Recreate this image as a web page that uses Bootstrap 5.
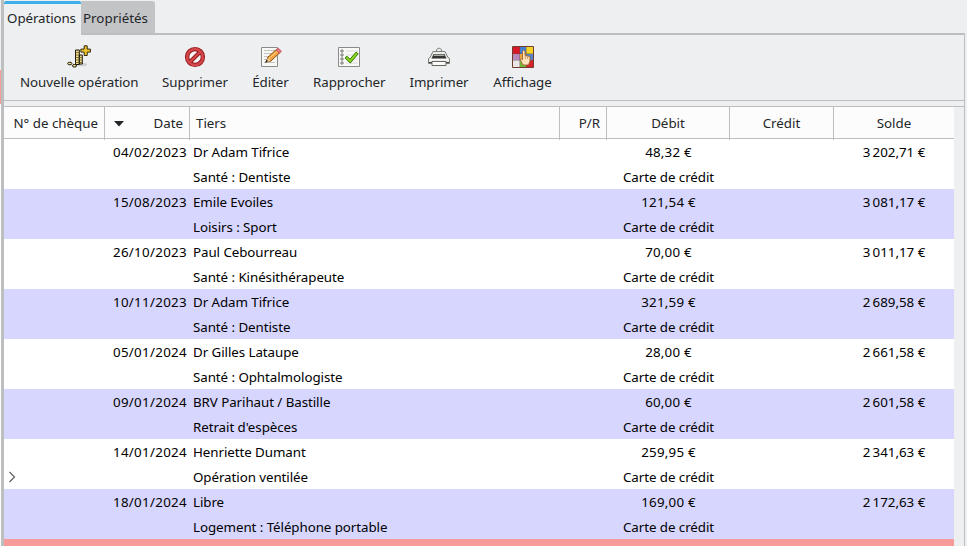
<!DOCTYPE html>
<html lang="fr">
<head>
<meta charset="utf-8">
<meta name="viewport" content="width=device-width, initial-scale=1">
<title>Opérations</title>
<link href="https://cdn.jsdelivr.net/npm/bootstrap@5.3.0/dist/css/bootstrap.min.css" rel="stylesheet">
<style>
:root { --line: #bcbebf; --ink: #232629; --panel: #eeeff1; }
body { font: 13.33px/25px "Noto Sans", sans-serif; letter-spacing: -.06px; color: var(--ink); background: var(--panel); }
.app-window { height: 546px; }
.edge { width: 4px; border-right: 3px solid var(--line); background: linear-gradient(#eff0f1 70px, #f79a9a 70px 104px, #fff 104px); background-clip: padding-box; }
.main-pane { width: 961px; }
.tab-strip { height: 35px; padding-top: 1px; border-bottom: 2px solid var(--line); }
.tab-strip .nav-link { height: 32px; padding: 0 5px 0 0; line-height: 35px; border: 0; border-radius: 0 3px 0 0; color: var(--ink); background: #c3c4c6; width: 74px; text-align: center; letter-spacing: .02px; }
.tab-strip .nav-link.active { width: 77px; height: 34px; margin-bottom: -2px; line-height: 29px; border-top: 3px solid #3daee9; border-radius: 2px 2px 0 0; background: var(--panel); padding-right: 2px; letter-spacing: -.1px; }
.pane-body { border-right: 1px solid var(--line); }
.tool-row { height: 66px; padding: 10px 0 0 16px; border-bottom: 1px solid var(--line); }
.tool { width: 118px; height: 50px; border: 0; padding: 0; background: none; color: var(--ink); line-height: 25px; white-space: nowrap; letter-spacing: -.06px; }
.tool svg { width: 24px; height: 24px; display: block; margin: 0 auto 1px; }
.w-sup { width: 66px; } .w-edi { width: 37px; } .w-rap { width: 72px; } .w-imp { width: 60px; } .w-aff { width: 59px; }
.ledger-frame { margin-top: 5px; border-top: 1px solid var(--line); }
.ledger { width: 950px; }
.ledger-row, .ledger-head { display: grid; grid-template-columns: 101px 85px 370px 47px 123px 104px 120px; }
.ledger-row { grid-auto-rows: 25px; height: 50px; background: #fff; color: #000; padding-top: 1px; }
.ledger-row:nth-child(odd) { background: #d7d6ff; }
.ledger-head { height: 32px; background: #fcfcfc; border-bottom: 1px solid var(--line); line-height: 33px; letter-spacing: 0; }
.ledger-head > div { border-right: 1px solid var(--line); }
.ledger-head > div:last-child { border: 0; }
.head-cheque { padding-right: 6px; }
.head-date { padding: 0 6px 0 8px; }
.head-tiers { padding-left: 6px; }
.head-pr { padding-right: 6px; }
.c-date { grid-column: 2; text-align: right; padding-right: 3px; letter-spacing: .31px; }
.c-tiers { grid-column: 3; padding-left: 3px; }
.c-debit { grid-column: 5; text-align: center; }
.c-solde { grid-column: 7; text-align: center; }
.c-sum { letter-spacing: .22px; }
.c-mark { grid-column: 1; padding-left: 4px; }
.c-mark svg { display: block; margin-top: 6px; }
.next-row { height: 7px; background: #f79a9a; }
</style>
<script src="https://cdn.jsdelivr.net/npm/bootstrap@5.3.0/dist/js/bootstrap.bundle.min.js"></script>
</head>
<body class="overflow-hidden">
<div class="app-window d-flex">
  <div class="edge flex-shrink-0"></div>
  <main class="main-pane flex-shrink-0">
    <nav class="nav tab-strip flex-nowrap">
      <a class="nav-link active" href="#">Opérations</a>
      <a class="nav-link" href="#">Propriétés</a>
    </nav>
    <div class="pane-body">
      <div class="tool-row d-flex gap-4">
        <button class="tool" type="button">
          <svg viewBox="0 0 24 24"><ellipse cx="15" cy="19.500" rx="5" ry="1.800" fill="#000" opacity=".13"/>
            <path d="M8.500 5h3.800v14.500H8.500zM12.300 10h3v9h-3z" fill="#efdf95" stroke="#1c1606"/>
            <path d="M8.500 7.500h3.800m-3.800 2.500h3.800m-3.800 2.500h3.800m-3.800 2.500h3.800m-3.800 2.500h3.800m0-5h3m-3 2.500h3m-3 2.500h3" stroke="#6a5820" stroke-width=".8"/>
            <ellipse cx="2.800" cy="18.500" rx="2.100" ry="1.300" fill="#efdf95" stroke="#1c1606"/><ellipse cx="7.500" cy="20.800" rx="2.100" ry="1.300" fill="#efdf95" stroke="#1c1606"/>
            <path d="M17.200.8h3v3.300h3.200v3H20.200v3.400h-3V7.100h-3.300v-3h3.300z" fill="#f1c52d" stroke="#30270a"/></svg>Nouvelle opération</button>
        <button class="tool w-sup" type="button">
          <svg viewBox="0 0 24 24"><circle cx="12" cy="12" r="7.900" fill="#f6f6f6" stroke="#96181c" stroke-width="4.400"/><path d="M6.500 17.500l11-11" stroke="#96181c" stroke-width="4"/><circle cx="12" cy="12" r="7.900" fill="none" stroke="#d3474b" stroke-width="2.500"/><path d="M6.500 17.500l11-11" stroke="#d3474b" stroke-width="2.200"/></svg>Supprimer</button>
        <button class="tool w-edi" type="button">
          <svg viewBox="0 0 24 24"><path d="M2.500 2.500h16v19h-16z" fill="#f8f8f6" stroke="#8a8b87"/><path d="M5 5.500h11M5 8.500h10M5 11.500h7M5 14.500h4M5 17.500h11" stroke="#c3c4c1"/><path d="M7 17l2-5 9-8 3 3.500-9 8.500z" fill="#f3a440" stroke="#8e4d10"/><path d="M10 13.500l9-8" stroke="#ffd28b"/><path d="M7 17l2-4 2.500 3z" fill="#f0d5a5"/><path d="M6.500 17.500l2-1.500-.7-.8z" fill="#111" stroke="#111" stroke-width=".6"/><path d="M17 5l2-2 3.500 3-2 2.500z" fill="#e7747b" stroke="#b54a4f" stroke-width=".6"/></svg>Éditer</button>
        <button class="tool w-rap" type="button">
          <svg viewBox="0 0 24 24"><path d="M1.500 2.500h21v19h-21z" fill="#f9f9f8" stroke="#8a8b88"/><g fill="#fff" stroke="#777874"><path d="M4 5h2v2H4zM4 9h2v2H4zM4 13h2v2H4zM4 17h2v2H4z"/></g><path d="M9 6h12M9 10h12M9 14h12M9 18h12" stroke="#d9dad6"/><path d="M8 13l2-1.800 3 3 6-7 2.200 1.600L13.300 18z" fill="#8ad51d" stroke="#357a06"/></svg>Rapprocher</button>
        <button class="tool w-imp" type="button">
          <svg viewBox="0 0 24 24"><path d="M9.500 7V4.500q2.500-3 5 0V7" fill="#eee" stroke="#80827d"/><path d="M6 6.500h12l3 6 1.500 1v5h-21v-5l1.500-1z" fill="#ecede9" stroke="#7b7d79"/><path d="M6.500 9h11l2 4.500h-15z" fill="#333635"/><path d="M7 9.500h10l.5 1.500h-11z" fill="#aaada9"/><path d="M2.500 14.500h19" stroke="#fff"/><path d="M5 16.500h14v4H5z" fill="#fbfbfa" stroke="#646662"/><path d="M2 17.500h3m14 0h3" stroke="#40423f"/></svg>Imprimer</button>
        <button class="tool w-aff" type="button">
          <svg viewBox="0 0 24 24"><path d="M2 2h7v7H2z" fill="#d9192a"/><path d="M9 2h6v7H9z" fill="#437fcc"/><path d="M15 2h7v7h-7z" fill="#f6d42a"/><path d="M2 9h7v6H2z" fill="#b58abb"/><path d="M9 9h6v6H9z" fill="#efa33c"/><path d="M15 9h7v6h-7z" fill="#5684c9"/><path d="M2 15h7v7H2z" fill="#e8e8e8"/><path d="M9 15h6v7H9z" fill="#71b735"/><path d="M15 15h7v7h-7z" fill="#d9222c"/><path d="M8.500 2v20M15.500 2v20M2 8.500h20M2 15.500h20" stroke="#5b4440" stroke-opacity=".35"/><path d="M1.500 1.500h21v21h-21z" fill="none" stroke="#713d31"/><path d="M11.500 13V6q1.300-1.500 2.500 0v4.500l5 1v4.500L17.500 20H12l-3-5.500q.8-1.700 2.500.3z" fill="#ffe2b9" stroke="#a0642c" stroke-width=".9"/><path d="M14.300 11v3m2.300-2.500v2.500" stroke="#b67b42" stroke-width=".7"/></svg>Affichage</button>
      </div>
      <div class="ledger-frame">
        <div class="ledger">
          <div class="ledger-head">
            <div class="head-cheque text-end">N° de chèque</div>
            <div class="head-date d-flex justify-content-between align-items-center"><svg width="12" height="6" viewBox="0 0 12 6"><path d="M1 0h10L6 5.500z" fill="#232629"/></svg><span>Date</span></div>
            <div class="head-tiers">Tiers</div>
            <div class="head-pr text-end">P/R</div>
            <div class="text-center">Débit</div>
            <div class="text-center">Crédit</div>
            <div class="text-center">Solde</div>
          </div>
          <div class="ledger-row"><div class="c-date">04/02/2023</div><div class="c-tiers">Dr Adam Tifrice</div><div class="c-debit c-sum">48,32&nbsp;€</div><div class="c-solde c-sum">3&#8239;202,71&nbsp;€</div><div class="c-tiers">Santé : Dentiste</div><div class="c-debit">Carte de crédit</div></div>
          <div class="ledger-row"><div class="c-date">15/08/2023</div><div class="c-tiers">Emile Evoiles</div><div class="c-debit c-sum">121,54&nbsp;€</div><div class="c-solde c-sum">3&#8239;081,17&nbsp;€</div><div class="c-tiers">Loisirs : Sport</div><div class="c-debit">Carte de crédit</div></div>
          <div class="ledger-row"><div class="c-date">26/10/2023</div><div class="c-tiers">Paul Cebourreau</div><div class="c-debit c-sum">70,00&nbsp;€</div><div class="c-solde c-sum">3&#8239;011,17&nbsp;€</div><div class="c-tiers">Santé : Kinésithérapeute</div><div class="c-debit">Carte de crédit</div></div>
          <div class="ledger-row"><div class="c-date">10/11/2023</div><div class="c-tiers">Dr Adam Tifrice</div><div class="c-debit c-sum">321,59&nbsp;€</div><div class="c-solde c-sum">2&#8239;689,58&nbsp;€</div><div class="c-tiers">Santé : Dentiste</div><div class="c-debit">Carte de crédit</div></div>
          <div class="ledger-row"><div class="c-date">05/01/2024</div><div class="c-tiers">Dr Gilles Lataupe</div><div class="c-debit c-sum">28,00&nbsp;€</div><div class="c-solde c-sum">2&#8239;661,58&nbsp;€</div><div class="c-tiers">Santé : Ophtalmologiste</div><div class="c-debit">Carte de crédit</div></div>
          <div class="ledger-row"><div class="c-date">09/01/2024</div><div class="c-tiers">BRV Parihaut / Bastille</div><div class="c-debit c-sum">60,00&nbsp;€</div><div class="c-solde c-sum">2&#8239;601,58&nbsp;€</div><div class="c-tiers">Retrait d'espèces</div><div class="c-debit">Carte de crédit</div></div>
          <div class="ledger-row"><div class="c-date">14/01/2024</div><div class="c-tiers">Henriette Dumant</div><div class="c-debit c-sum">259,95&nbsp;€</div><div class="c-solde c-sum">2&#8239;341,63&nbsp;€</div><div class="c-mark"><svg width="9" height="12" viewBox="0 0 9 12"><path d="M1.500 1l5 5-5 5" fill="none" stroke="#55585b" stroke-width="1.100"/></svg></div><div class="c-tiers">Opération ventilée</div><div class="c-debit">Carte de crédit</div></div>
          <div class="ledger-row"><div class="c-date">18/01/2024</div><div class="c-tiers">Libre</div><div class="c-debit c-sum">169,00&nbsp;€</div><div class="c-solde c-sum">2&#8239;172,63&nbsp;€</div><div class="c-tiers">Logement : Téléphone portable</div><div class="c-debit">Carte de crédit</div></div>
          <div class="next-row"></div>
        </div>
      </div>
    </div>
  </main>
</div>
</body>
</html>
